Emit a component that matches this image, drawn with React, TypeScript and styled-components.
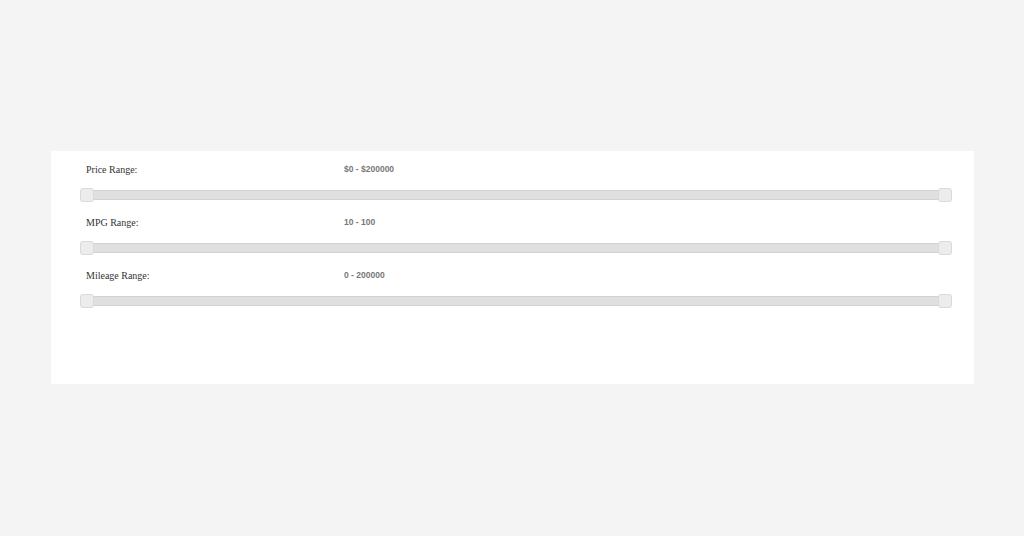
import styled, { createGlobalStyle } from "styled-components";

const GlobalStyle = createGlobalStyle`
  html, body {
    margin: 0;
    padding: 0;
    background: #f4f4f4;
  }
`;

interface RangeFilter {
  label: string;
  value: string;
}

const filters: RangeFilter[] = [
  { label: "Price Range:", value: "$0 - $200000" },
  { label: "MPG Range:", value: "10 - 100" },
  { label: "Mileage Range:", value: "0 - 200000" },
];

const App = () => {
  return (
    <>
      <GlobalStyle />
      <Page>
        <FilterPanel>
          {filters.map((f) => (
            <FilterRow key={f.label}>
              <FilterHeader>
                <FilterLabel>{f.label}</FilterLabel>
                <FilterValue>{f.value}</FilterValue>
              </FilterHeader>
              <Slider>
                <Track />
                <Thumb $side="left" />
                <Thumb $side="right" />
              </Slider>
            </FilterRow>
          ))}
        </FilterPanel>
      </Page>
    </>
  );
};

const Page = styled.div`
  width: 1024px;
  height: 536px;
  padding: 151px 0 0 51px;
  box-sizing: border-box;
`;

const FilterPanel = styled.div`
  width: 923px;
  height: 233px;
  box-sizing: border-box;
  background: #ffffff;
  padding: 8px 22px 0 29px;
`;

const FilterRow = styled.div`
  display: flex;
  flex-direction: column;
  margin-bottom: 10px;
`;

const FilterHeader = styled.div`
  display: flex;
  align-items: center;
  height: 20px;
  padding-left: 6px;
  margin-bottom: 9px;
`;

const FilterLabel = styled.span`
  width: 258px;
  font-family: "Liberation Serif", serif;
  font-size: 10px;
  color: #333;
`;

const FilterValue = styled.span`
  font-family: "Liberation Sans", Arial, sans-serif;
  font-size: 8.5px;
  font-weight: bold;
  color: #777;
`;

const Slider = styled.div`
  position: relative;
  height: 14px;
  display: flex;
  align-items: center;
`;

const Track = styled.div`
  flex: 1;
  height: 10px;
  box-sizing: border-box;
  background: #dfdfdf;
  border: 1px solid #d2d2d2;
  border-radius: 2px;
`;

const Thumb = styled.div<{ $side: "left" | "right" }>`
  position: absolute;
  top: 0;
  ${(p) => (p.$side === "left" ? "left: 0;" : "right: 0;")}
  width: 14px;
  height: 14px;
  box-sizing: border-box;
  background: #ececec;
  border: 1px solid #dadada;
  border-radius: 3px;
`;

export default App;
